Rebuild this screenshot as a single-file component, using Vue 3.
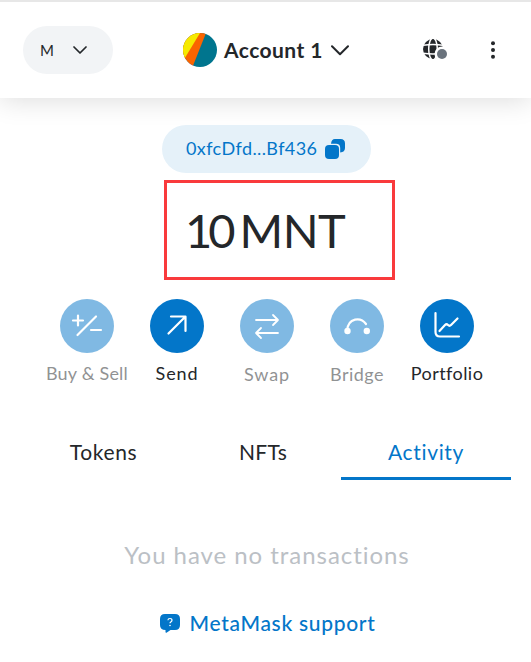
<script setup>
const actions = [
  { id: 'buy', label: 'Buy & Sell', disabled: true },
  { id: 'send', label: 'Send', disabled: false },
  { id: 'swap', label: 'Swap', disabled: true },
  { id: 'bridge', label: 'Bridge', disabled: true },
  { id: 'portfolio', label: 'Portfolio', disabled: false },
]
const tabs = ['Tokens', 'NFTs', 'Activity']
</script>

<template>
  <div class="wallet">
    <header class="header">
      <button class="network">
        <span>M</span>
        <svg width="14" height="8" viewBox="0 0 14 8"><path d="M1 1l6 6 6-6" /></svg>
      </button>
      <button class="account">
        <svg class="avatar" width="34" height="34" viewBox="0 0 34 34">
          <defs><clipPath id="avatar-clip"><circle cx="17" cy="17" r="17" /></clipPath></defs>
          <g clip-path="url(#avatar-clip)">
            <rect width="34" height="34" fill="#00758e" />
            <path d="M0 0H23L9.500 34H0z" fill="#fa6400" />
            <path d="M0 0H17L2.500 24L0 28z" fill="#f6ea00" />
            <path d="M6 30L11 33.500L10 34H6z" fill="#f5195b" />
          </g>
        </svg>
        <span class="account-name">Account 1</span>
        <svg class="chevron" width="18" height="11" viewBox="0 0 18 11"><path d="M1 1.2l8 8 8-8" /></svg>
      </button>
      <div class="tools">
        <svg width="25" height="22" viewBox="0 0 25 22">
          <circle cx="10" cy="10" r="10" fill="#24272a" />
          <g fill="none" stroke="#fff" stroke-width="1.5">
            <ellipse cx="10" cy="10" rx="4.3" ry="11" />
            <path d="M0 6.2Q10 4.8 20 6.2M0 14.2Q10 15.6 20 14.2" />
          </g>
          <circle cx="19" cy="15" r="7.5" fill="#fff" />
          <circle cx="19" cy="15" r="5" fill="#6a737d" />
        </svg>
        <svg width="4" height="18" viewBox="0 0 4 18" fill="#24272a">
          <circle cx="2" cy="2.2" r="2" /><circle cx="2" cy="9" r="2" /><circle cx="2" cy="15.8" r="2" />
        </svg>
      </div>
    </header>

    <main class="main">
      <button class="address">
        <span>0xfcDfd...Bf436</span>
        <svg width="20" height="20" viewBox="0 0 20 20" fill="#0376c9">
          <path d="M10 0h5.5Q20 0 20 4.5V9Q20 13 15.2 13.6V9Q15.2 4.800 11 4.800H6Q6.400 0 10 0z" />
          <rect x="0" y="6" width="14" height="14" rx="4" />
        </svg>
      </button>
      <div class="balance"><span class="amount">10</span><span class="symbol">MNT</span></div>

      <nav class="actions">
        <button v-for="a in actions" :key="a.id" class="action" :class="[a.id, { disabled: a.disabled }]">
          <svg class="action-icon" width="54" height="54" viewBox="0 0 54 54">
            <circle cx="27" cy="27" r="27" fill="#0376c9" />
            <g fill="none" stroke="#fff" stroke-width="2.2" stroke-linecap="round" stroke-linejoin="round">
              <path v-if="a.id === 'buy'" d="M13 21.500H23M18 16.500V26.500M17.500 36L36 17.500M31 31H41" />
              <path v-else-if="a.id === 'send'" d="M18.500 34.500L35 18M21 17.500H35.500V32" />
              <path v-else-if="a.id === 'swap'" stroke-width="1.800" d="M16 21H38M33 16L38 21L33 26M38 34H16M21 29L16 34L21 39" />
              <template v-else-if="a.id === 'bridge'">
                <path d="M17 32C18 18 31 18 36 25" />
                <circle cx="17.500" cy="32" r="2.100" fill="#fff" />
                <circle cx="36.800" cy="32" r="2.100" fill="#fff" />
              </template>
              <path v-else d="M15.500 14V33Q15.500 37.500 20 37.500H39M19.500 32L25 26Q26.500 24.500 28 26Q29.500 27.500 31 26L37.500 19.500" />
            </g>
          </svg>
          <span class="action-label">{{ a.label }}</span>
        </button>
      </nav>

      <nav class="tabs">
        <button v-for="t in tabs" :key="t" class="tab" :class="[t.toLowerCase(), { active: t === 'Activity' }]">
          <span>{{ t }}</span>
        </button>
      </nav>

      <p class="empty">You have no transactions</p>
      <a class="support">
        <svg width="20" height="19" viewBox="0 0 20 19">
          <path d="M5 0H15Q20 0 20 5V11Q20 16 15 16H10.500L6.500 18.700Q5.500 19 5.500 18V16Q0 16 0 11V5Q0 0 5 0z" fill="#0376c9" />
          <path d="M7.900 6.200Q8 4.500 10 4.500Q12 4.500 12 6.200Q12 7.200 10.800 7.900Q10 8.400 10 9.300" fill="none" stroke="#fff" stroke-width="1.200" />
          <circle cx="10" cy="11.500" r=".8" fill="#fff" />
        </svg>
        <span>MetaMask support</span>
      </a>
    </main>
  </div>
</template>

<style>
body { margin: 0; background: #fff; }
</style>

<style scoped>
.wallet {
  box-sizing: border-box;
  width: 531px;
  height: 662px;
  overflow: hidden;
  border-top: 2px solid #e7e7e7;
  color: #24272a;
  font-family: Lato, "Liberation Sans", sans-serif;
  font-variant-ligatures: none;
  white-space: nowrap;
}
button {
  display: flex;
  align-items: center;
  padding: 0;
  border: 0;
  background: none;
  color: inherit;
  font: inherit;
  font-variant-ligatures: none;
}
svg { display: block; flex: none; }
.header {
  box-sizing: border-box;
  display: flex;
  align-items: center;
  height: 96px;
  padding: 0 36px 0 23px;
  box-shadow: 0 2px 26px rgba(0, 0, 0, 0.14);
}
.network {
  box-sizing: border-box;
  width: 90px;
  height: 48px;
  padding: 0 26px 0 17px;
  justify-content: space-between;
  border-radius: 24px;
  background: #f2f4f6;
  font-size: 15px;
}
.network span { padding-bottom: 1px; }
.network path, .chevron path {
  fill: none;
  stroke: #24272a;
  stroke-width: 1.7;
  stroke-linecap: round;
  stroke-linejoin: round;
}
.account { margin-left: 70px; }
.account-name {
  width: 100px;
  margin: 0 7px 0 7px;
  padding-bottom: 2px;
  text-align: left;
  font-size: 21px;
  font-weight: 700;
  letter-spacing: 0.45px;
}
.chevron path { stroke-width: 2; }
.tools {
  display: flex;
  align-items: center;
  gap: 43px;
  margin-left: auto;
}
.tools svg:first-child { margin-top: -1px; }
.main {
  display: flex;
  flex-direction: column;
  align-items: center;
}
.address {
  box-sizing: border-box;
  width: 209px;
  height: 48px;
  margin: 27px 0 0 2px;
  padding: 0 26px 0 24px;
  justify-content: space-between;
  border-radius: 24px;
  background: #e5f1f9;
  color: #0376c9;
  font-size: 18px;
  letter-spacing: 0.4px;
}
.address span { padding-bottom: 2px; }
.balance {
  box-sizing: border-box;
  display: flex;
  gap: 8px;
  width: 231px;
  height: 100px;
  margin: 7px 0 0 28px;
  padding: 0 0 1px 18px;
  align-items: center;
  border: 3px solid #f93a3c;
  font-size: 47px;
}
.amount { letter-spacing: -4px; }
.symbol { letter-spacing: -0.5px; }
.actions {
  display: flex;
  margin-top: 19px;
  margin-left: 3px;
}
.action {
  width: 90px;
  flex-direction: column;
}
.action-label {
  margin: 9px 0 1px;
  font-size: 18px;
  line-height: 22px;
  letter-spacing: 0.45px;
}
.buy .action-label { letter-spacing: 0.2px; }
.swap .action-label, .bridge .action-label { margin: 10px 0 0; }
.swap .action-label, .send .action-label { letter-spacing: 0.9px; }
.disabled { opacity: 0.5; }
.tabs {
  display: flex;
  width: 491px;
  margin-top: 41px;
}
.tab {
  box-sizing: border-box;
  width: 170px;
  height: 54px;
  padding-bottom: 1px;
  justify-content: center;
  border-bottom: 3px solid transparent;
  font-size: 21px;
  letter-spacing: 0.65px;
}
.tokens { width: 167px; }
.nfts { width: 154px; padding-right: 2px; letter-spacing: 0.3px; }
.active { border-color: #0376c9; color: #0376c9; }
.empty {
  margin: 60px 0 0 3px;
  color: #bbc0c5;
  font-size: 24px;
  line-height: 30px;
  letter-spacing: 0.95px;
}
.support {
  display: flex;
  align-items: center;
  gap: 9px;
  margin: 40px 0 0 5px;
  color: #0376c9;
  font-size: 21px;
  font-weight: 500;
  line-height: 26px;
  letter-spacing: 0.7px;
}
</style>
